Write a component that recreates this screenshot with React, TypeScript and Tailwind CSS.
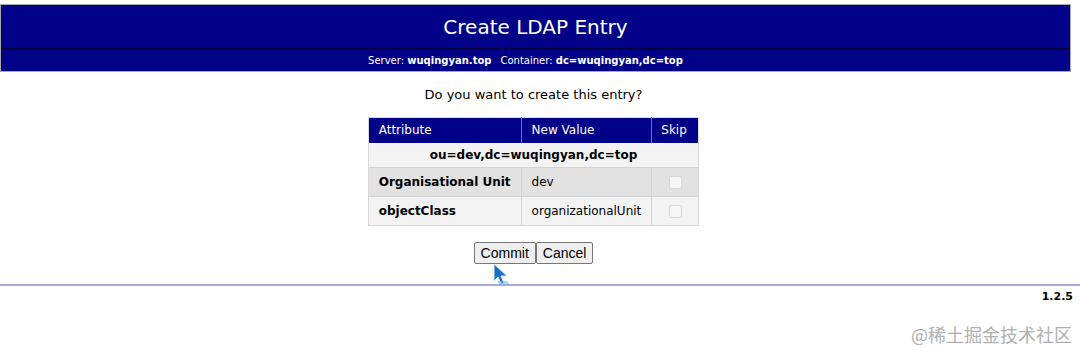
export default function App() {
  return (
    <div className="relative w-[1080px] h-[358px] bg-white font-['DejaVu_Sans',sans-serif] text-black">
      <div className="h-1" />
      {/* Header */}
      <div className="w-[1071px] border border-[#a8a8a8] bg-[#020288]">
        <div className="h-[45px] flex items-center justify-center text-white text-[20px] border-b-2 border-[#03033f]">
          Create LDAP Entry
        </div>
        <div className="h-[21px] pr-[20px] flex items-center justify-center text-white text-[10px]">
          <span>
            Server: <b>wuqingyan.top</b>
          </span>
          <span className="ml-[9px]">
            Container: <b>dc=wuqingyan,dc=top</b>
          </span>
        </div>
      </div>

      <div className="w-[1067px] flex flex-col items-center">
        <p className="mt-[13px] text-[13px] h-[20px]">Do you want to create this entry?</p>

        <table className="mt-[12px] border-collapse text-[12px] border border-[#d8d8d8] whitespace-nowrap">
          <thead>
            <tr className="bg-[#020288] text-white h-[25px]">
              <th className="w-[152px] text-left font-normal px-[10px] border-r border-[#6b6bd0]">Attribute</th>
              <th className="w-[129px] text-left font-normal px-[10px] border-r border-[#6b6bd0]">New Value</th>
              <th className="w-[47px] text-left font-normal px-[9px]">Skip</th>
            </tr>
          </thead>
          <tbody>
            <tr className="bg-[#f3f3f3] h-[25px]">
              <td colSpan={3} className="text-center font-bold border-b border-[#d4d4d4]">
                ou=dev,dc=wuqingyan,dc=top
              </td>
            </tr>
            <Row name="Organisational Unit" value="dev" bg="bg-[#e2e2e2]" />
            <Row name="objectClass" value="organizationalUnit" bg="bg-[#f3f3f3]" />
          </tbody>
        </table>

        <div className="mt-[16px] flex font-['Liberation_Sans',sans-serif] text-[14px]">
          <button className="h-[22px] px-[6px] bg-[#efefef] border border-[#767676] rounded-[2px]">Commit</button>
          <button className="h-[22px] px-[6px] bg-[#efefef] border border-[#767676] rounded-[2px]">Cancel</button>
        </div>
      </div>

      <div className="mt-[20px] w-[1080px] border-t-2 border-[#a9a9d6]" />
      <div className="w-[1073px] text-right text-[11px] font-bold mt-[3px]">1.2.5</div>

      <div className="absolute right-[8px] top-[321px] text-[18px] text-[#b0b0b0] font-['Noto_Sans_CJK_SC',sans-serif]">
        @稀土掘金技术社区
      </div>

      {/* cursor */}
      <svg className="absolute left-[492px] top-[263px]" width="20" height="24" viewBox="0 0 20 24">
        <path d="M2 1 L2 18 L6 14 L9 21 L12 20 L9 13 L15 13 Z" fill="#1b6fc4" stroke="#d8ecff" strokeWidth="1" />
        <path d="M6 19 L16 19 M7 21 L17 21" stroke="#6aaee8" strokeWidth="1" />
      </svg>
    </div>
  );
}

function Row({ name, value, bg }: { name: string; value: string; bg: string }) {
  return (
    <tr className={`${bg} h-[29px]`}>
      <td className="px-[10px] font-bold border-b border-r border-[#d4d4d4]">{name}</td>
      <td className="px-[10px] border-b border-r border-[#d4d4d4]">{value}</td>
      <td className="border-b border-[#d4d4d4]">
        <div className="mx-auto w-[13px] h-[13px] border border-[#d8d8d8] rounded-[2px] bg-[#f6f6f6]" />
      </td>
    </tr>
  );
}
